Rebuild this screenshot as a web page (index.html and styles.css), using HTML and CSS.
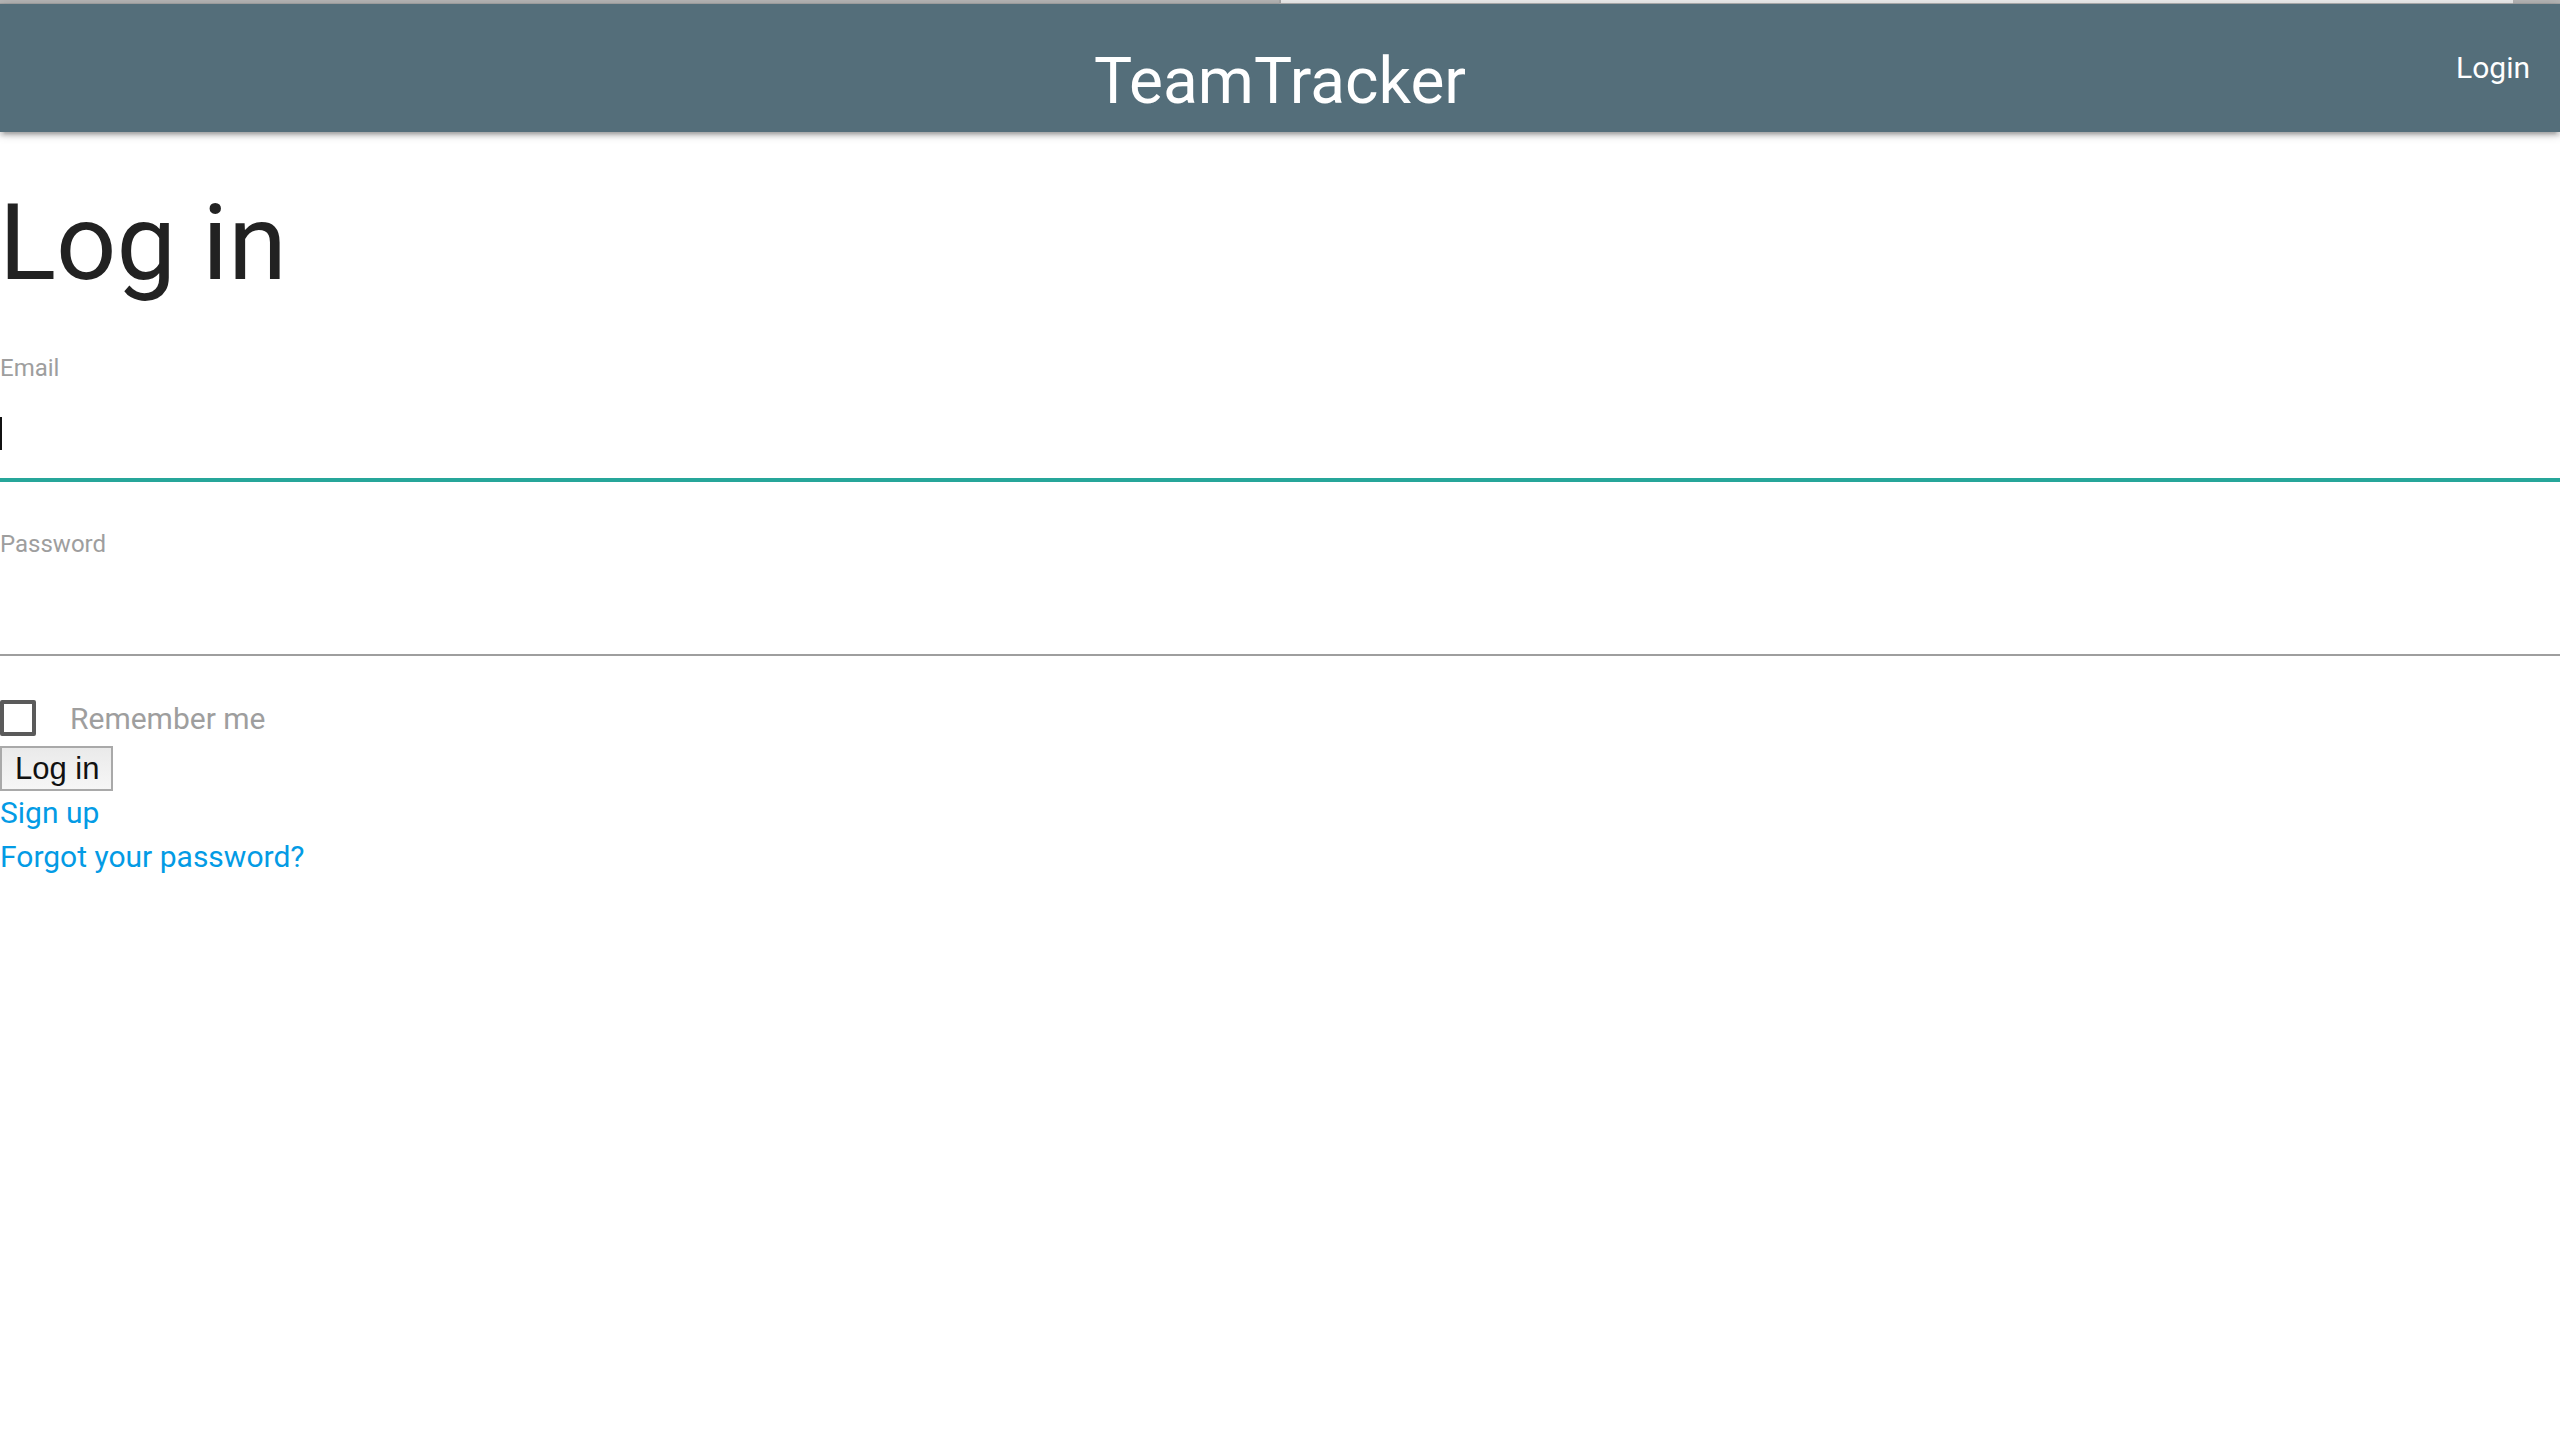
FILE: index.html
```html
<!DOCTYPE html>
<html lang="en">
<head>
<meta charset="utf-8">
<title>TeamTracker - Log in</title>
<link rel="stylesheet" href="styles.css">
</head>
<body>
  <div class="tabstrip">
    <div class="tab"></div>
    <div class="tab tab--active"></div>
    <div class="tab"></div>
  </div>
  <nav class="navbar">
    <div class="navbar-side"></div>
    <a class="brand" href="#">TeamTracker</a>
    <div class="navbar-side navbar-right">
      <a class="nav-link" href="#">Login</a>
    </div>
  </nav>

  <main class="page">
    <h2 class="title">Log in</h2>
    <form class="login-form">
      <div class="field field--focused">
        <label class="field-label" for="email">Email</label>
        <input class="field-input" id="email" type="email">
      </div>
      <div class="field field--last">
        <label class="field-label" for="password">Password</label>
        <input class="field-input" id="password" type="password">
      </div>
      <label class="remember">
        <input class="remember-input" type="checkbox">
        <span class="remember-box"></span>
        <span class="remember-text">Remember me</span>
      </label>
      <button class="submit" type="button">Log in</button>
    </form>
    <div class="links">
      <a class="link" href="#">Sign up</a>
      <a class="link" href="#">Forgot your password?</a>
    </div>
  </main>
</body>
</html>
```

FILE: styles.css
```css
* {
  box-sizing: border-box;
}

html, body {
  margin: 0;
  padding: 0;
  background: #ffffff;
}

body {
  font-family: Roboto, "Noto Sans", sans-serif;
  color: #212121;
}

.tabstrip {
  display: grid;
  grid-template-columns: 1279px 1fr 47px;
  height: 4px;
  background: #b2b2b2;
}

.tab {
  background: #b5b5b5;
  border-bottom: 1px solid #a6a6a6;
}

.tab--active {
  background: #ececec;
  border-left: 2px solid #a8a8a8;
  border-bottom: 1px solid #b0b0b0;
}

.navbar {
  position: relative;
  z-index: 1;
  display: grid;
  grid-template-columns: 1fr auto 1fr;
  align-items: start;
  height: 128px;
  background: #546e7a;
  box-shadow: 0 4px 4px 0 rgba(0,0,0,0.14), 0 6px 2px -4px rgba(0,0,0,0.12), 0 2px 10px 0 rgba(0,0,0,0.2);
}

.brand {
  margin-top: 40px;
  font-size: 64px;
  line-height: 75px;
  color: #ffffff;
  text-decoration: none;
  white-space: nowrap;
}

.navbar-right {
  display: flex;
  justify-content: flex-end;
}

.nav-link {
  padding: 0 30px;
  font-size: 30px;
  line-height: 128px;
  color: #ffffff;
  text-decoration: none;
}

.page {
  padding: 0;
}

.title {
  margin: 53px 0 52px -1px;
  font-size: 106px;
  line-height: 116px;
  font-weight: 400;
  color: #222222;
}

.login-form {
  display: flex;
  flex-direction: column;
  align-items: flex-start;
}

.field {
  position: relative;
  width: 100%;
  margin-bottom: 49px;
}

.field--last {
  margin-bottom: 38px;
}

.field-label {
  display: block;
  font-size: 24px;
  line-height: 30px;
  color: #9e9e9e;
}

.field-input {
  display: block;
  width: 100%;
  height: 97px;
  margin: 0;
  padding: 0;
  border: 0;
  border-bottom: 2px solid #9e9e9e;
  outline: none;
  background: transparent;
  font-family: Roboto, sans-serif;
  font-size: 32px;
  color: #212121;
  caret-color: transparent;
}

.field--focused .field-input {
  border-bottom-color: #26a69a;
  box-shadow: 0 2px 0 0 #26a69a;
}

.field--focused::before {
  content: "";
  position: absolute;
  left: 0;
  top: 64px;
  width: 2px;
  height: 33px;
  background: #111111;
}

.remember {
  position: relative;
  display: block;
  height: 50px;
  padding-left: 70px;
  font-size: 30px;
  line-height: 50px;
  color: #9e9e9e;
  cursor: pointer;
}

.remember-input {
  position: absolute;
  opacity: 0;
  pointer-events: none;
  margin: 0;
  width: 0;
  height: 0;
}

.remember-box {
  position: absolute;
  left: 0;
  top: 6px;
  width: 36px;
  height: 36px;
  border: 4px solid #5a5a5a;
  border-radius: 2px;
}

.submit {
  display: block;
  width: 113px;
  height: 45px;
  margin: 2px 0 0 0;
  padding: 0 0 0 13px;
  text-align: left;
  border: 2px solid #a9a9a9;
  border-radius: 0;
  background: linear-gradient(#eaeaea, #f6f6f6);
  font-family: "Liberation Sans", Arial, sans-serif;
  font-size: 31px;
  line-height: 41px;
  color: #111111;
}

.links {
  display: flex;
  flex-direction: column;
  align-items: flex-start;
}

.link {
  font-size: 30px;
  line-height: 44px;
  color: #039be5;
  text-decoration: none;
}
```
